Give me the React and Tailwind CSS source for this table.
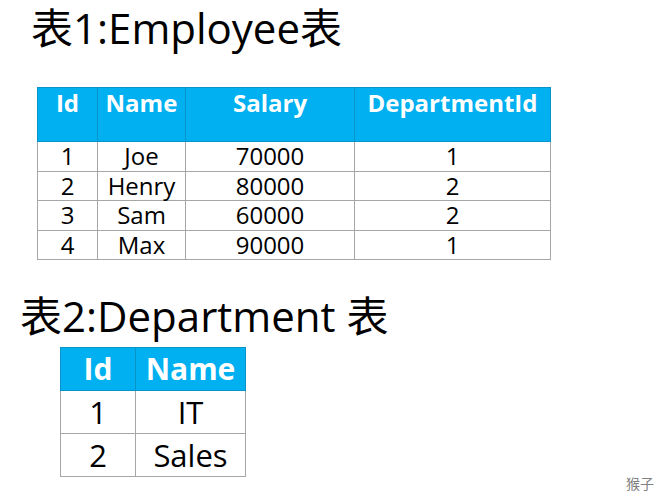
import React from 'react';

const employees = [
  { id: 1, name: 'Joe', salary: 70000, dept: 1 },
  { id: 2, name: 'Henry', salary: 80000, dept: 2 },
  { id: 3, name: 'Sam', salary: 60000, dept: 2 },
  { id: 4, name: 'Max', salary: 90000, dept: 1 },
];

const departments = [
  { id: 1, name: 'IT' },
  { id: 2, name: 'Sales' },
];

export default function App() {
  return (
    <div className="relative w-[660px] h-[495px] bg-white text-black overflow-hidden font-['Open_Sans','Noto_Sans_CJK_SC',sans-serif]">
      <h1 className="ml-[31px] pt-[3px] text-[42px] leading-[50px] font-normal">
        表1:Employee表
      </h1>

      <table className="ml-[37px] mt-[34px] border-collapse text-center table-fixed">
        <thead>
          <tr className="h-[54px] bg-[#00b0f0] text-white">
            <th className="w-[60px] align-top pt-[3px] text-[24px] leading-[24px] font-bold border border-[#0a93c7]">Id</th>
            <th className="w-[88px] align-top pt-[3px] text-[24px] leading-[24px] font-bold border border-[#0a93c7]">Name</th>
            <th className="w-[169px] align-top pt-[3px] text-[24px] leading-[24px] font-bold border border-[#0a93c7]">Salary</th>
            <th className="w-[196px] align-top pt-[3px] text-[24px] leading-[24px] font-bold border border-[#0a93c7]">DepartmentId</th>
          </tr>
        </thead>
        <tbody className="text-[24px] leading-[24px]">
          {employees.map((e) => (
            <tr key={e.id} className="h-[29.5px]">
              <td className="border border-[#a6a6a6] p-0">{e.id}</td>
              <td className="border border-[#a6a6a6] p-0">{e.name}</td>
              <td className="border border-[#a6a6a6] p-0">{e.salary}</td>
              <td className="border border-[#a6a6a6] p-0">{e.dept}</td>
            </tr>
          ))}
        </tbody>
      </table>

      <h2 className="ml-[20px] mt-[31px] text-[42px] leading-[50px] font-normal">
        表2:Department 表
      </h2>

      <table className="ml-[60px] mt-[6px] border-collapse text-center table-fixed">
        <thead>
          <tr className="h-[43px] bg-[#00b0f0] text-white">
            <th className="w-[75px] p-0 text-[30px] leading-[36px] font-bold border border-[#0a93c7]">Id</th>
            <th className="w-[110px] p-0 text-[30px] leading-[36px] font-bold border border-[#0a93c7]">Name</th>
          </tr>
        </thead>
        <tbody className="text-[31px] leading-[36px]">
          {departments.map((d) => (
            <tr key={d.id} className="h-[43px]">
              <td className="border border-[#a6a6a6] p-0">{d.id}</td>
              <td className="border border-[#a6a6a6] p-0">{d.name}</td>
            </tr>
          ))}
        </tbody>
      </table>

      <span className="absolute right-[6px] bottom-[1px] text-[14px] text-[#7f7f7f]">
        猴子
      </span>
    </div>
  );
}
